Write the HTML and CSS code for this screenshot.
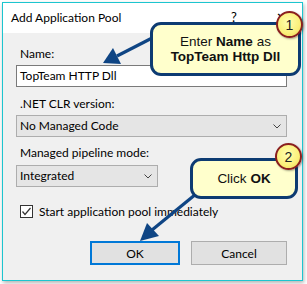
FILE: index.html
```html
<!DOCTYPE html>
<html lang="en">
<head>
    <meta charset="UTF-8">
    <meta name="viewport" content="width=device-width, initial-scale=1.0">
    <title>Add Application Pool</title>
    <link rel="stylesheet" href="styles.css">
</head>
<body>
    <div class="dialog">
        <div class="title-bar">
            <span class="title">Add Application Pool</span>
            <span class="title-btn btn-help">?</span>
            <span class="title-btn btn-close">&#x2715;</span>
        </div>
        <div class="dialog-body">
            <div class="field-label label-name">Name:</div>
            <div class="textbox">TopTeam HTTP Dll</div>

            <div class="field-label label-clr">.NET CLR version:</div>
            <div class="select select-wide">
                <span>No Managed Code</span>
                <svg class="chevron" width="8" height="5" viewBox="0 0 8 5"><path d="M0.5 0.5 L4 4 L7.5 0.5" fill="none" stroke="#444" stroke-width="1"/></svg>
            </div>

            <div class="field-label label-mode">Managed pipeline mode:</div>
            <div class="select select-narrow">
                <span>Integrated</span>
                <svg class="chevron" width="8" height="5" viewBox="0 0 8 5"><path d="M0.5 0.5 L4 4 L7.5 0.5" fill="none" stroke="#444" stroke-width="1"/></svg>
            </div>

            <div class="check-row">
                <span class="checkbox">
                    <svg width="11" height="11" viewBox="0 0 11 11"><path d="M1.5 5.5 L4 8.5 L9.5 2" fill="none" stroke="#333" stroke-width="1.2"/></svg>
                </span>
                <span>Start application pool immediately</span>
            </div>

            <div class="buttons">
                <button class="btn btn-default">OK</button>
                <button class="btn btn-cancel">Cancel</button>
            </div>
        </div>
    </div>

    <!-- pointer arrows from the callouts -->
    <svg class="arrows" width="307" height="284" viewBox="0 0 307 284">
        <line x1="156" y1="36" x2="117" y2="56" stroke="#0f4584" stroke-width="3.2"/>
        <polygon points="103,63 113,48 121,64" fill="#0f4584"/>
        <line x1="196" y1="194" x2="152" y2="230" stroke="#0f4584" stroke-width="3.2"/>
        <polygon points="140,241 147,223 159,236" fill="#0f4584"/>
    </svg>

    <div class="callout callout-name">
        <span>Enter <b>Name</b> as</span>
        <b>TopTeam Http Dll</b>
    </div>
    <div class="badge badge-name">1</div>

    <div class="callout callout-ok">
        <span>Click <b>OK</b></span>
    </div>
    <div class="badge badge-ok">2</div>
</body>
</html>
```

FILE: styles.css
```css
body {
    margin: 0;
    width: 307px;
    height: 284px;
    position: relative;
    overflow: hidden;
    background-color: #ffffff;
    font-family: Lato, "Noto Sans", sans-serif;
    font-size: 12px;
    color: #000;
}
.dialog {
    margin: 2px 0 0 2px;
    width: 301px;
    height: 279px;
    box-sizing: border-box;
    border: 1px solid #1cc5cf;
    background-color: #f0f0f0;
    display: flex;
    flex-direction: column;
    box-shadow: 1px 2px 4px rgba(0,0,0,0.3);
}
.title-bar {
    height: 30px;
    flex-shrink: 0;
    background-color: #ffffff;
    display: flex;
    align-items: center;
    padding: 0 0 2px 8px;
    box-sizing: border-box;
}
.title {
    flex-grow: 1;
}
.title-btn {
    text-align: center;
    font-size: 13px;
}
.btn-help {
    width: 52px;
}
.btn-close {
    width: 42px;
}
.dialog-body {
    display: flex;
    flex-direction: column;
    padding: 13px 15px 0 13px;
}
.field-label {
    line-height: 16px;
    padding-left: 4px;
}
.label-clr {
    margin-top: 9px;
}
.label-mode {
    margin-top: 8px;
}
.textbox {
    margin-top: 3px;
    height: 22px;
    box-sizing: border-box;
    border: 1px solid #7a7a7a;
    background-color: #ffffff;
    padding-left: 3px;
    line-height: 20px;
}
.select {
    margin-top: 3px;
    height: 22px;
    box-sizing: border-box;
    border: 1px solid #adadad;
    background-color: #e5e5e5;
    padding: 0 5px 0 3px;
    line-height: 20px;
    display: flex;
    align-items: center;
    justify-content: space-between;
}
.select-narrow {
    width: 142px;
    margin-top: 4px;
}
.check-row {
    margin-top: 18px;
    padding-left: 4px;
    display: flex;
    align-items: center;
    gap: 6px;
    height: 13px;
}
.checkbox {
    width: 13px;
    height: 13px;
    box-sizing: border-box;
    border: 1px solid #333;
    background-color: #fff;
    display: flex;
    align-items: center;
    justify-content: center;
}
.buttons {
    margin-top: 23px;
    display: flex;
    justify-content: flex-end;
    gap: 11px;
}
.btn {
    height: 24px;
    box-sizing: border-box;
    border: 1px solid #adadad;
    background-color: #e1e1e1;
    font-family: inherit;
    font-size: 12px;
    color: #000;
    padding: 0;
}
.btn-default {
    width: 90px;
    border: 2px solid #0078d7;
}
.btn-cancel {
    width: 96px;
}
.arrows {
    position: absolute;
    left: 0;
    top: 0;
}
.callout {
    position: absolute;
    box-sizing: border-box;
    border: 3px solid #0d3b72;
    border-radius: 11px;
    background-color: #ffffcc;
    font-family: "Liberation Sans", Arial, sans-serif;
    font-size: 13.5px;
    line-height: 15px;
    color: #111;
    display: flex;
    flex-direction: column;
    align-items: center;
    justify-content: center;
}
.callout-name {
    left: 150px;
    top: 22px;
    width: 151px;
    height: 54px;
}
.callout-ok {
    left: 190px;
    top: 158px;
    width: 108px;
    height: 41px;
}
.badge {
    position: absolute;
    width: 27px;
    height: 27px;
    box-sizing: border-box;
    border: 2px solid #8a1f1f;
    border-radius: 50%;
    background: radial-gradient(circle at 45% 40%, #ffffb0 0%, #fbf07a 60%, #e8d24a 100%);
    font-family: "Liberation Sans", Arial, sans-serif;
    font-size: 14px;
    color: #222;
    display: flex;
    align-items: center;
    justify-content: center;
    box-shadow: 1px 1px 2px rgba(0,0,0,0.35);
}
.badge-name {
    left: 276px;
    top: 11px;
}
.badge-ok {
    left: 275px;
    top: 143px;
}
```
